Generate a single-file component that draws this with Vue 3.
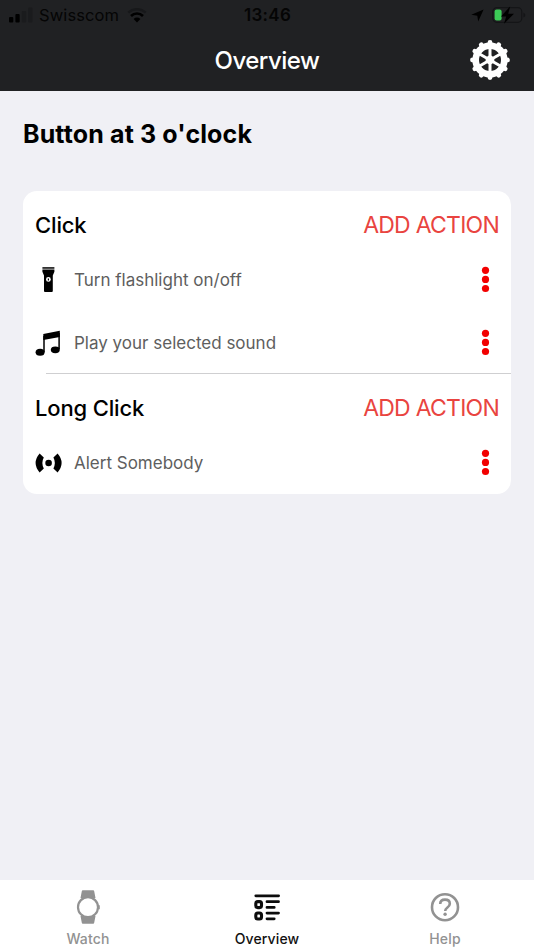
<template>
  <div class="screen">
    <header>
      <div class="status">
        <div class="carrier">
          <svg width="24" height="16" viewBox="0 0 24 16">
            <rect x="0" y="10" width="4.3" height="5.5" rx="1" fill="#000" />
            <rect x="6.4" y="7" width="4.3" height="8.5" rx="1" fill="#000" />
            <rect x="12.8" y="4" width="4.3" height="11.5" rx="1" fill="#1a1b1d" />
            <rect x="19.2" y="0.5" width="4.3" height="15" rx="1" fill="#1a1b1d" />
          </svg>
          <span class="network">Swisscom</span>
          <svg width="20" height="16" viewBox="0 0 20 16">
            <path d="M1.3 5.7a12.5 12.5 0 0 1 17.4 0" fill="none" stroke="#17181a" stroke-width="2.5" />
            <path d="M4 8.9a8.7 8.7 0 0 1 12 0" fill="none" stroke="#000" stroke-width="2.7" />
            <path d="M6.6 11.9a4.9 4.9 0 0 1 6.8 0L10 15.4z" fill="#000" />
          </svg>
        </div>
        <span class="time">13:46</span>
        <div class="battery">
          <svg width="13" height="13" viewBox="0 0 13 13">
            <path d="M12.6 0.4L7.2 12.6L6.3 6.7L0.3 5.8z" fill="#000" />
          </svg>
          <svg width="34" height="18" viewBox="0 0 34 18">
            <rect x="0.8" y="1.7" width="29" height="14.6" rx="4" fill="none" stroke="#141517" stroke-width="1.2" />
            <path d="M31.4 6.6v5q2-1 2-2.5t-2-2.5z" fill="#141517" />
            <rect x="2.6" y="3.4" width="7" height="11.2" rx="2" fill="#3ccb57" />
            <path d="M18.2 0.4L9 10.4h5.2L12 17.8L22 7.7h-5.8z" fill="#000" />
          </svg>
        </div>
      </div>
      <div class="bar">
        <h1>Overview</h1>
        <svg class="gear" width="40" height="40" viewBox="-20 -20 40 40">
          <circle r="14.3" fill="none" stroke="#fff" stroke-width="6.6" />
          <circle r="4.4" fill="#fff" />
          <path d="M0-13V13M-11.3-6.5L11.3 6.5M-11.3 6.5L11.3-6.5" stroke="#fff" stroke-width="3" />
          <circle v-for="n in 12" :key="n" cy="-17.5" r="2.4" fill="#fff" :transform="`rotate(${n * 30})`" />
        </svg>
      </div>
    </header>

    <main>
      <h2>Button at 3 o'clock</h2>
      <div class="card">
        <section v-for="group in groups" :key="group.title">
          <div class="group-head">
            <h3>{{ group.title }}</h3>
            <button type="button">ADD ACTION</button>
          </div>
          <div v-for="action in group.actions" :key="action.icon" class="action">
            <svg v-if="action.icon === 'flashlight'" width="28" height="28" viewBox="0 0 28 28">
              <path d="M7.4 1.2h12v1.5h-12z" />
              <path d="M7.4 3.6h12v2.2L17.8 9.6v15.4q0 1-1 1h-6.8q-1 0-1-1V9.6L7.4 5.8z" />
              <circle cx="13.4" cy="13.4" r="2.4" fill="#fff" />
              <path d="M12.8 12.5h1.2v1.9h-1.2z" />
            </svg>
            <svg v-else-if="action.icon === 'music'" width="28" height="28" viewBox="0 0 28 28">
              <path d="M8.3 4.9L24.8 1.8v6.2L8.3 11.1z" />
              <path d="M9 7v16M24.1 4v16" fill="none" stroke="#000" stroke-width="1.5" />
              <ellipse cx="5.1" cy="23.3" rx="4.5" ry="3.5" />
              <ellipse cx="20.3" cy="20.8" rx="4.5" ry="3.4" />
            </svg>
            <svg v-else width="28" height="28" viewBox="0 0 28 28">
              <circle cx="13.6" cy="14" r="3.3" />
              <path d="M4.6 4.6L8.8 8.6Q5.9 14 8.8 19.4L4.6 23.4Q-3.4 14 4.6 4.6z" />
              <path d="M22.6 4.6L18.4 8.6Q21.3 14 18.4 19.4L22.6 23.4Q30.6 14 22.6 4.6z" />
            </svg>
            <span class="label">{{ action.label }}</span>
            <svg class="more" width="9" height="28" viewBox="0 0 9 28">
              <circle cx="4.5" cy="4.3" r="3.6" />
              <circle cx="4.5" cy="13.4" r="3.6" />
              <circle cx="4.5" cy="22.5" r="3.6" />
            </svg>
          </div>
        </section>
      </div>
    </main>

    <nav>
      <a class="tab">
        <svg width="36" height="36" viewBox="0 0 36 36">
          <path d="M12.8 1.2h10.4q.8 0 1 1L25.5 9h-15l1.3-6.8q.2-1 1-1zM10.5 27h15l-1.3 6.8q-.2 1-1 1H12.8q-.8 0-1-1z" fill="#929292" />
          <circle cx="18" cy="18.2" r="10" fill="#fff" stroke="#929292" stroke-width="2.2" />
          <path d="M28.8 16.2h1v4h-1z" fill="#929292" />
        </svg>
        <span>Watch</span>
      </a>
      <a class="tab active">
        <svg width="36" height="36" viewBox="0 0 36 36">
          <g fill="none" stroke="#0c0c0c" stroke-width="2.8" stroke-linecap="round">
            <path d="M6.8 6.8h22.8M18 12.7h11.5M18 18.4h7.2M18 24.1h11.5M18 29.8h7.2" />
            <rect x="6.8" y="12.6" width="5.7" height="6" rx="2" stroke-width="3.1" />
            <rect x="6.8" y="24" width="5.7" height="6" rx="2" stroke-width="3.1" />
          </g>
        </svg>
        <span>Overview</span>
      </a>
      <a class="tab">
        <svg width="36" height="36" viewBox="0 0 36 36">
          <circle cx="18" cy="18.2" r="13" fill="none" stroke="#929292" stroke-width="2.6" />
          <path d="M13.2 15.1q0-4.5 4.8-4.5 4.8 0 4.8 4.1 0 2.2-2.6 4-2 1.4-2 3.2" fill="none" stroke="#929292" stroke-width="2.6" />
          <circle cx="18.1" cy="25.2" r="1.7" fill="#929292" />
        </svg>
        <span>Help</span>
      </a>
    </nav>
  </div>
</template>

<script setup>
const groups = [
  {
    title: 'Click',
    actions: [
      { icon: 'flashlight', label: 'Turn flashlight on/off' },
      { icon: 'music', label: 'Play your selected sound' }
    ]
  },
  {
    title: 'Long Click',
    actions: [{ icon: 'alert', label: 'Alert Somebody' }]
  }
]
</script>

<style>
body {
  margin: 0;
}
</style>

<style scoped>
.screen {
  height: 950px;
  display: flex;
  flex-direction: column;
  background: #f0f0f5;
  font-family: Inter, "Liberation Sans", sans-serif;
  color: #000;
  overflow: hidden;
}

h1, h2, h3 {
  margin: 0;
}

svg {
  display: block;
  flex: none;
}

header {
  height: 91px;
  background: #202123;
}

.status {
  height: 30px;
  display: grid;
  grid-template-columns: 1fr auto 1fr;
  align-items: center;
  padding: 0 8px 0 9px;
  box-sizing: border-box;
  color: #050505;
}

.carrier {
  display: flex;
  align-items: center;
}

.network {
  font-size: 16.5px;
  letter-spacing: 0.1px;
  margin: 0 8px 0 6px;
}

.time {
  font-size: 17px;
  font-weight: 600;
  letter-spacing: 0.3px;
}

.battery {
  display: flex;
  align-items: center;
  justify-content: flex-end;
  gap: 8px;
}

.bar {
  height: 60px;
  display: grid;
  grid-template-columns: 40px 1fr 40px;
  align-items: center;
  padding: 0 24px;
}

h1 {
  grid-column: 2;
  text-align: center;
  color: #fff;
  font-size: 24px;
  font-weight: 500;
  letter-spacing: -0.5px;
}

main {
  flex: 1;
  padding: 26px 23px 0;
}

h2 {
  font-size: 25px;
  line-height: 34px;
  font-weight: 700;
  letter-spacing: 0.13px;
}

.card {
  margin-top: 40px;
  height: 303px;
  background: #fff;
  border-radius: 14px;
}

section + section {
  margin-top: -1px;
  padding-top: 1px;
  background: linear-gradient(#cfcfd1, #cfcfd1) 23px 0 / 100% 1px no-repeat;
}

.group-head {
  height: 57px;
  box-sizing: border-box;
  display: flex;
  align-items: center;
  justify-content: space-between;
  padding: 11px 12px 0;
}

h3 {
  font-size: 22px;
  font-weight: 500;
  letter-spacing: -0.15px;
}

button {
  border: 0;
  padding: 0;
  background: none;
  color: #e94440;
  font: inherit;
  font-size: 23px;
  letter-spacing: -0.75px;
}

.action {
  height: 63px;
  display: flex;
  align-items: center;
  padding: 0 21px 0 12px;
}

.label {
  flex: 1;
  margin-left: 11px;
  color: #5e5e5e;
  font-size: 17px;
}

.more {
  fill: #f20000;
}

nav {
  height: 70px;
  display: grid;
  grid-template-columns: repeat(3, 1fr);
  background: #fff;
}

.tab {
  display: flex;
  flex-direction: column;
  align-items: center;
  padding-top: 9px;
  color: #929292;
  font-size: 14px;
  line-height: 18px;
  font-weight: 500;
  letter-spacing: 0.15px;
}

.tab:first-child {
  padding-right: 2px;
}

.tab span {
  margin-top: 5px;
}

.active {
  color: #111;
}
</style>
